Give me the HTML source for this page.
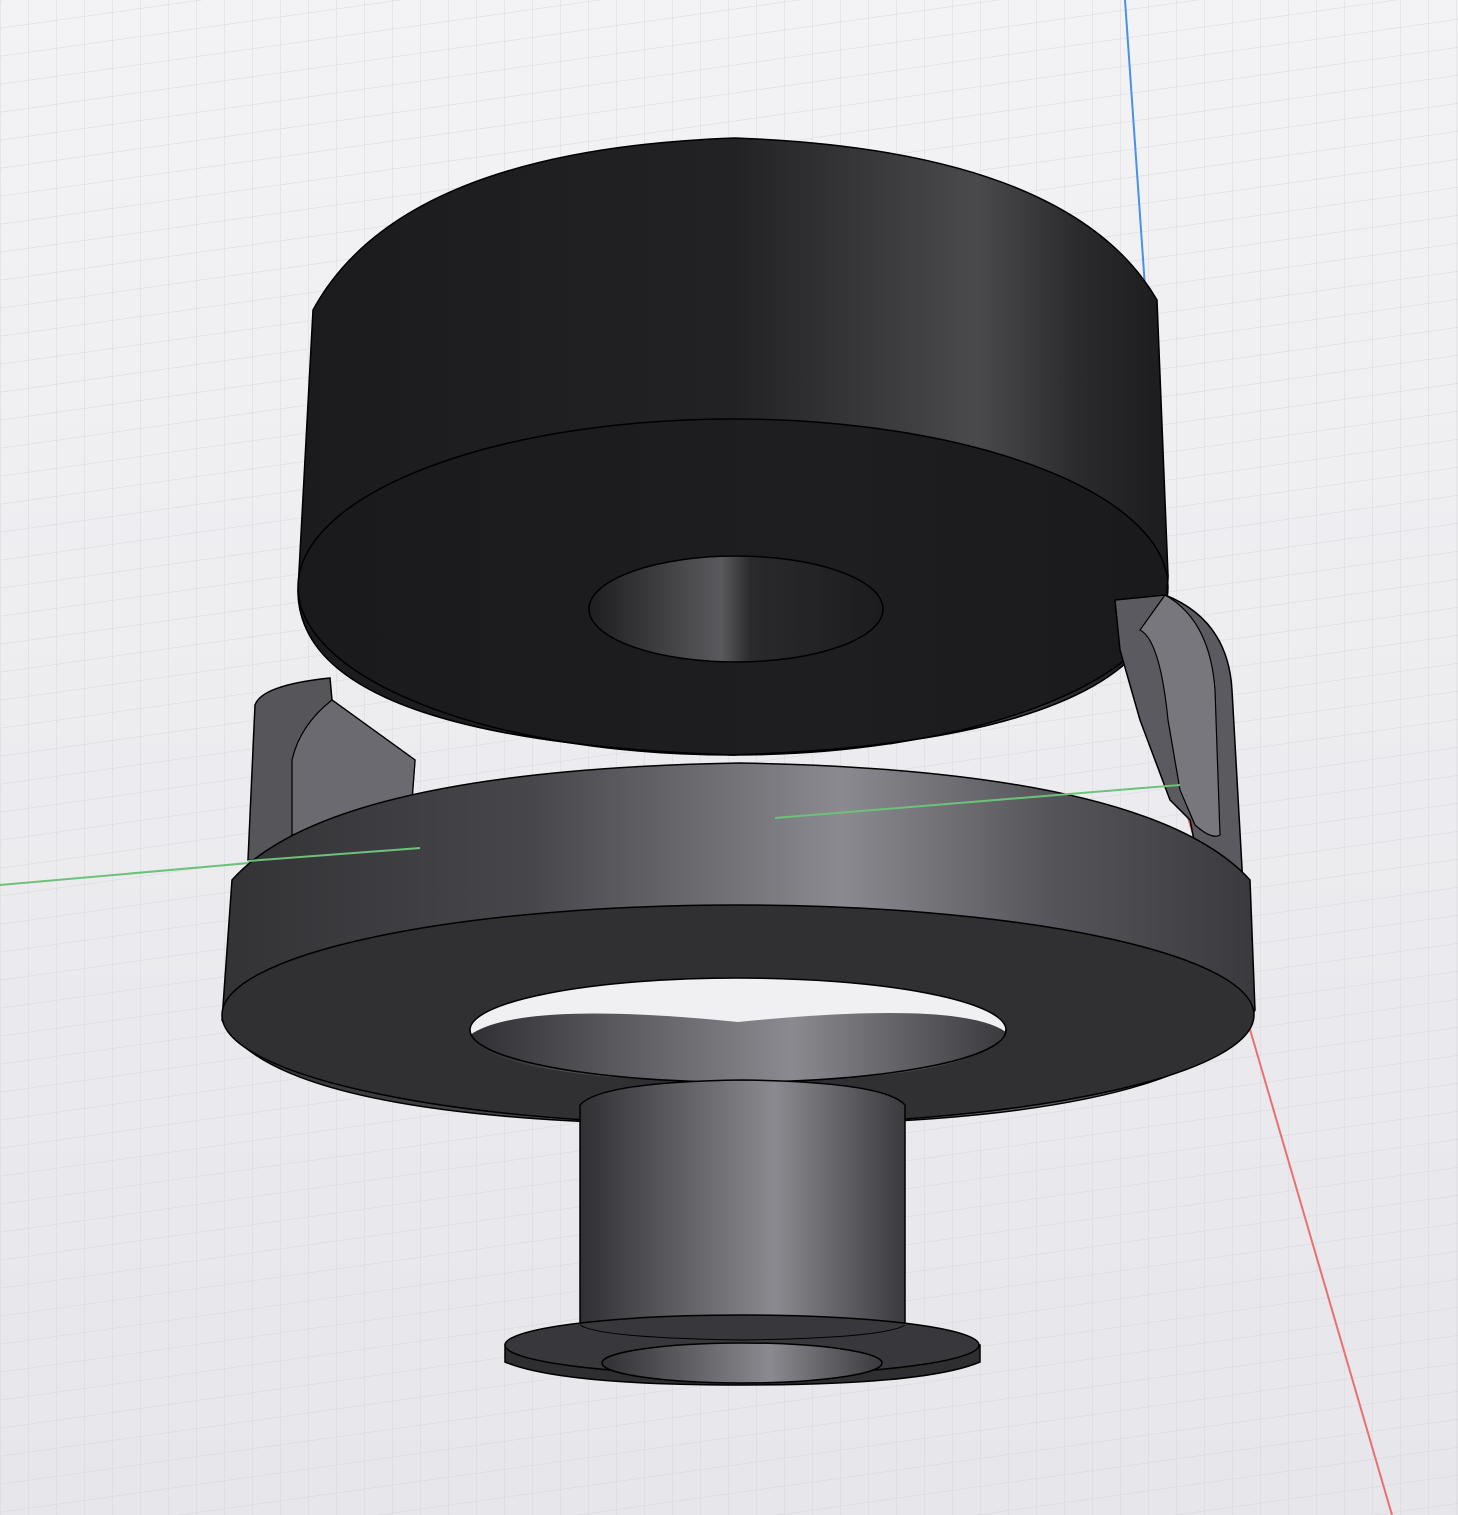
<!DOCTYPE html>
<html><head><meta charset="utf-8"><style>
html,body{margin:0;padding:0;width:1458px;height:1515px;overflow:hidden;background:#ebebef}
</style></head><body>
<svg width="1458" height="1515" viewBox="0 0 1458 1515" xmlns="http://www.w3.org/2000/svg">
<defs>
<linearGradient id="bg" x1="0" y1="0" x2="0" y2="1">
<stop offset="0" stop-color="#f3f3f5"/><stop offset="1" stop-color="#e6e6eb"/></linearGradient>
<linearGradient id="blk" x1="0" y1="0" x2="1" y2="0">
<stop offset="0" stop-color="#1b1b1d"/><stop offset="0.5" stop-color="#222224"/><stop offset="0.78" stop-color="#4a4a4d"/><stop offset="0.9" stop-color="#2a2a2c"/><stop offset="1" stop-color="#1c1c1e"/></linearGradient>
<linearGradient id="blkface" x1="0" y1="0" x2="1" y2="0">
<stop offset="0" stop-color="#1a1a1c"/><stop offset="0.6" stop-color="#1e1e20"/><stop offset="1" stop-color="#1a1a1c"/></linearGradient>
<linearGradient id="hole" x1="0" y1="0" x2="1" y2="0">
<stop offset="0" stop-color="#1e1e20"/><stop offset="0.45" stop-color="#5a5a5e"/><stop offset="0.55" stop-color="#2a2a2c"/><stop offset="1" stop-color="#1c1c1e"/></linearGradient>
<linearGradient id="grey" x1="0" y1="0" x2="1" y2="0">
<stop offset="0" stop-color="#333336"/><stop offset="0.3" stop-color="#46464b"/><stop offset="0.6" stop-color="#8a8a90"/><stop offset="0.8" stop-color="#55555a"/><stop offset="1" stop-color="#3a3a3e"/></linearGradient>
<linearGradient id="tube" x1="0" y1="0" x2="1" y2="0">
<stop offset="0" stop-color="#303034"/><stop offset="0.6" stop-color="#8a8a90"/><stop offset="1" stop-color="#3a3a3e"/></linearGradient>
<pattern id="grid" width="28" height="28" patternUnits="userSpaceOnUse" patternTransform="skewY(-8)">
<path d="M28 0H0V28" fill="none" stroke="#d2d2d8" stroke-width="1"/></pattern>
</defs>
<rect width="1458" height="1515" fill="url(#bg)"/>
<rect width="1458" height="1515" fill="url(#grid)" opacity="0.8"/>
<line x1="1125" y1="0" x2="1180" y2="790" stroke="#4a90e8" stroke-width="2"/>
<line x1="0" y1="885" x2="420" y2="848" stroke="#6cc27a" stroke-width="2"/>
<line x1="1180" y1="790" x2="1392" y2="1515" stroke="#e87070" stroke-width="2"/>
<path d="M313 310 Q400 150 735 138 Q1070 150 1157 300 L1168 575 Q1168 740 733 755 Q298 740 298 590 Z" fill="url(#blk)" stroke="#000" stroke-width="1.5"/>
<ellipse cx="733" cy="587" rx="435" ry="168" fill="url(#blkface)" stroke="#000" stroke-width="1.5"/>
<path d="M298 590 Q298 740 733 755 Q1168 740 1168 575" fill="none" stroke="#000" stroke-width="1.5"/>
<ellipse cx="736" cy="609" rx="147" ry="53" fill="url(#hole)" stroke="#000" stroke-width="1.5"/>
<path d="M248 860 L255 705 Q262 685 330 678 L332 700 L415 760 L412 800 L292 835 L290 860 Z" fill="#55555a" stroke="#000" stroke-width="1.5"/>
<path d="M292 835 L292 760 Q300 725 332 700 L415 760 L412 800 Z" fill="#6a6a70" stroke="#000" stroke-width="1.2"/>
<path d="M1115 600 L1165 595 Q1228 620 1232 690 L1250 1010 L1215 900 L1200 870 L1190 820 L1170 800 L1140 720 L1120 650 Z" fill="#5a5a60" stroke="#000" stroke-width="1.5"/>
<path d="M1165 595 Q1210 620 1215 690 L1220 835 Q1212 840 1195 825 L1180 790 L1168 720 Q1160 640 1140 630 Z" fill="#77777d" stroke="#000" stroke-width="1.2"/>
<path d="M232 880 Q330 770 740 763 Q1150 770 1250 880 L1255 1010 Q1200 1125 738 1125 Q276 1125 222 1020 Z" fill="url(#grey)" stroke="#000" stroke-width="1.5"/>
<line x1="248" y1="861" x2="420" y2="848" stroke="#6cc27a" stroke-width="2"/>
<line x1="775" y1="818" x2="1180" y2="785" stroke="#6cc27a" stroke-width="2"/>
<ellipse cx="738" cy="1015" rx="516" ry="110" fill="#303033" stroke="#000" stroke-width="1.5"/>
<ellipse cx="738" cy="1030" rx="268" ry="52" fill="#f0f0f3" stroke="#000" stroke-width="1.5"/>
<path d="M470 1035 Q520 1000 738 1022 Q960 1000 1006 1032 Q980 1080 738 1082 Q495 1080 470 1035 Z" fill="url(#tube)" stroke="none"/>
<path d="M470 1030 A268 52 0 0 0 1006 1030" fill="none" stroke="#000" stroke-width="1.5"/>
<path d="M580 1105 Q600 1082 742 1080 Q885 1082 905 1105 L905 1325 L580 1325 Z" fill="url(#tube)" stroke="#000" stroke-width="1.5"/>
<path d="M505 1345 L505 1362 Q560 1385 742 1385 Q925 1385 980 1362 L980 1345 Z" fill="#2e2e31" stroke="#000" stroke-width="1.5"/>
<ellipse cx="742" cy="1345" rx="237" ry="30" fill="#38383c" stroke="#000" stroke-width="1.5"/>
<ellipse cx="742" cy="1363" rx="140" ry="20" fill="url(#tube)" stroke="#000" stroke-width="1.5"/>
<path d="M580 1325 Q600 1338 742 1340 Q885 1338 905 1325" fill="none" stroke="#000" stroke-width="1"/>
</svg>
</body></html>
